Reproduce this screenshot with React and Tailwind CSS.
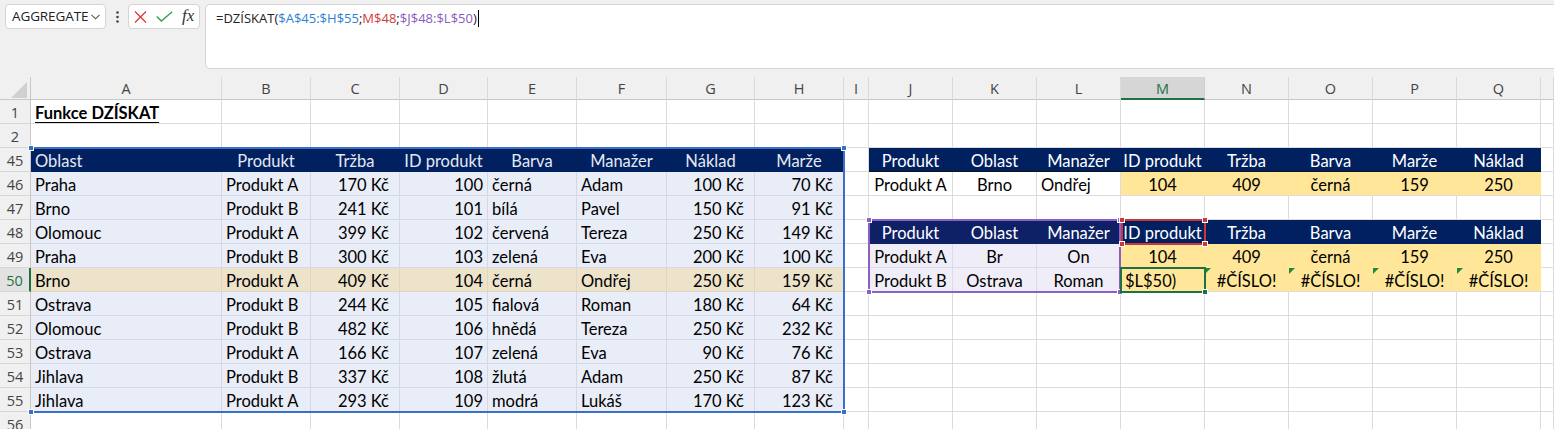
import React from 'react';

const COLS = ['A','B','C','D','E','F','G','H','I','J','K','L','M','N','O','P','Q',''];
const ROWS = [1,2,45,46,47,48,49,50,51,52,53,54,55,56];

const T1 = {
  46: ['Praha','Produkt A','170 Kč','100','černá','Adam','100 Kč','70 Kč'],
  47: ['Brno','Produkt B','241 Kč','101','bílá','Pavel','150 Kč','91 Kč'],
  48: ['Olomouc','Produkt A','399 Kč','102','červená','Tereza','250 Kč','149 Kč'],
  49: ['Praha','Produkt B','300 Kč','103','zelená','Eva','200 Kč','100 Kč'],
  50: ['Brno','Produkt A','409 Kč','104','černá','Ondřej','250 Kč','159 Kč'],
  51: ['Ostrava','Produkt B','244 Kč','105','fialová','Roman','180 Kč','64 Kč'],
  52: ['Olomouc','Produkt B','482 Kč','106','hnědá','Tereza','250 Kč','232 Kč'],
  53: ['Ostrava','Produkt A','166 Kč','107','zelená','Eva','90 Kč','76 Kč'],
  54: ['Jihlava','Produkt B','337 Kč','108','žlutá','Adam','250 Kč','87 Kč'],
  55: ['Jihlava','Produkt A','293 Kč','109','modrá','Lukáš','170 Kč','123 Kč'],
};
const T1H = ['Oblast','Produkt','Tržba','ID produkt','Barva','Manažer','Náklad','Marže'];
const T1ALIGN = ['l','l','r2','r','l','l','r2','r2'];
const T2H = ['Produkt','Oblast','Manažer','ID produkt','Tržba','Barva','Marže','Náklad'];

const KIND = {
  plain: 'bg-white border-[#dcdcdc]',
  t1h: 'bg-[#002060] border-[#002060] text-[#e4e9f3]',
  t1d: 'bg-[#e9edf7] border-[#d3d8e2]',
  t1s: 'bg-[#ece3ca] border-[#dfd7bf]',
  navy: 'bg-[#002060] border-[#002060] text-white',
  navyb: 'bg-[#002060] border-r-[#002060] border-b-[#111111] text-white',
  navyp: 'bg-[#0f2166] border-[#0f2166] text-white',
  yellow: 'bg-[#ffe699] border-[#ffe699]',
  yellowb: 'bg-[#ffe699] border-r-[#ffe699] border-b-[#dcdcdc]',
  lav: 'bg-[#efedf7] border-[#dcd9e8]',
  whiteb: 'bg-white border-r-[#dcdcdc] border-b-[#dcdcdc]',
};

const ALIGN = {
  l: 'justify-start pl-[4px]',
  r: 'justify-end pr-[4px]',
  r2: 'justify-end pr-[10px]',
  c: 'justify-center px-[2px]',
};

function spec(col, row) {
  const ci = COLS.indexOf(col);
  if (row === 1 && col === 'A') return { t: 'Funkce DZÍSKAT', a: 'l', k: 'plain', bold: true };
  if (row === 45 && ci >= 0 && ci <= 7) return { t: T1H[ci], a: ci === 0 ? 'l' : 'c', k: 't1h' };
  if (T1[row] && ci >= 0 && ci <= 7) return { t: T1[row][ci], a: T1ALIGN[ci], k: row === 50 ? 't1s' : 't1d' };
  const ti = ci - 9; // J = 0
  if (ti >= 0 && ti <= 7) {
    if (row === 45) return { t: T2H[ti], a: 'c', k: 'navyb' };
    if (row === 46) {
      const v = ['Produkt A','Brno','Ondřej','104','409','černá','159','250'];
      return { t: v[ti], a: ti === 2 ? 'l' : 'c', k: ti < 3 ? 'whiteb' : 'yellowb' };
    }
    if (row === 48) return { t: T2H[ti], a: 'c', k: ti < 3 ? 'navyp' : 'navy' };
    if (row === 49) {
      const v = ['Produkt A','Br','On','104','409','černá','159','250'];
      return { t: v[ti], a: 'c', k: ti < 3 ? 'lav' : 'yellow' };
    }
    if (row === 50) {
      const v = ['Produkt B','Ostrava','Roman','$L$50)','#ČÍSLO!','#ČÍSLO!','#ČÍSLO!','#ČÍSLO!'];
      return { t: v[ti], a: ti === 3 ? 'l' : 'c', k: ti < 3 ? 'lav' : 'yellowb', err: ti > 3 };
    }
  }
  return { t: '', a: 'l', k: 'plain' };
}

function Handle({ pos, color }) {
  return <div className={`absolute w-[6px] h-[6px] ${pos} ${color} border border-white`} />;
}

function Cell({ col, row }) {
  const s = spec(col, row);
  return (
    <div className={`relative h-[24px] border-r border-b flex items-center overflow-hidden whitespace-nowrap pt-[4px] ${KIND[s.k]} ${ALIGN[s.a]}`}>
      {s.err && (
        <div className="absolute left-0 top-0 w-0 h-0 border-t-[6px] border-t-[#1e8a3e] border-r-[6px] border-r-transparent" />
      )}
      <span className={s.bold ? 'font-bold underline underline-offset-[3px]' : ''}>{s.t}</span>
    </div>
  );
}

function TopBar() {
  return (
    <div className="h-[77px] flex items-start pt-[4px] pl-[5px] bg-[#f0f0f0] font-['Open_Sans',sans-serif] text-[13.5px] text-[#222] overflow-hidden">
      <div className="shrink-0 w-[101px] h-[25px] bg-white border border-[#d5d5d5] rounded-[4px] flex items-center pl-[6px] pr-[5px] justify-between">
        <span className="tracking-[-0.1px]">AGGREGATE</span>
        <svg width="9" height="6" viewBox="0 0 9 6"><path d="M0.5 0.8 L4.5 4.8 L8.5 0.8" fill="none" stroke="#555" strokeWidth="1.1" /></svg>
      </div>
      <div className="shrink-0 w-[22px] h-[25px] flex items-center justify-center">
        <svg width="3" height="12" viewBox="0 0 3 12"><circle cx="1.5" cy="1.5" r="1.3" fill="#444" /><circle cx="1.5" cy="6" r="1.3" fill="#444" /><circle cx="1.5" cy="10.5" r="1.3" fill="#444" /></svg>
      </div>
      <div className="shrink-0 w-[72px] h-[25px] bg-white border border-[#d5d5d5] rounded-[4px] flex items-center pl-[5px] gap-[9px]">
        <svg width="13" height="12" viewBox="0 0 13 12"><path d="M1 0.5 L12 11.5 M12 0.5 L1 11.5" stroke="#e0383e" strokeWidth="1.3" fill="none" /></svg>
        <svg width="17" height="11" viewBox="0 0 17 11"><path d="M0.8 5.5 L5.3 10 L16.2 0.8" stroke="#2f9e4f" strokeWidth="1.3" fill="none" /></svg>
        <span className="font-['Liberation_Serif',serif] italic text-[17px] text-[#333] leading-none -mt-[2px]">fx</span>
      </div>
      <div className="shrink-0 ml-[5px] w-[1400px] h-[65px] bg-white border border-[#d5d5d5] rounded-[5px] pl-[10px] pt-[4px] text-[13px] leading-[18px] whitespace-nowrap">
        <span className="text-[#222]">=DZÍSKAT(</span>
        <span className="text-[#2f7fd2]">$A$45:$H$55</span>
        <span className="text-[#222]">;</span>
        <span className="text-[#cf3c35]">M$48</span>
        <span className="text-[#222]">;</span>
        <span className="text-[#8d5cc2]">$J$48:$L$50</span>
        <span className="text-[#222]">)</span>
        <span className="inline-block w-[1px] h-[17px] bg-black align-[-4px] ml-[1px]" />
      </div>
    </div>
  );
}

function Sheet() {
  return (
    <div className="relative grid grid-cols-[31px_191px_89px_89px_88px_89px_90px_88px_89px_25px_84px_84px_84px_84px_84px_84px_84px_84px_13px] font-['Lato',sans-serif] text-[16.5px] text-black">
      {/* column header row */}
      <div className="relative h-[23px] bg-[#f0f0f0] border-r border-b border-[#c8c8c8]">
        <svg className="absolute left-[11px] top-[5px]" width="16" height="16" viewBox="0 0 16 16"><polygon points="16,0 16,16 0,16" fill="#d0d0d0" /></svg>
      </div>
      {COLS.map((c, i) => (
        <div
          key={'h' + i}
          className={
            c === 'M'
              ? "h-[23px] bg-[#d6d6d6] border-r border-r-[#d0d0d0] border-b-2 border-b-[#1e7145] flex items-center justify-center text-[#1e7145] font-['Open_Sans',sans-serif] text-[14.5px] pt-[2px]"
              : "h-[23px] bg-[#f0f0f0] border-r border-r-[#dadada] border-b border-b-[#c8c8c8] flex items-center justify-center text-[#444] font-['Open_Sans',sans-serif] text-[14.5px] pt-[1px]"
          }
        >
          {c}
        </div>
      ))}
      {ROWS.map((r) => (
        <React.Fragment key={r}>
          <div
            className={
              r === 50
                ? "h-[24px] bg-[#e2e2e2] border-b border-b-[#d6d6d6] border-r-2 border-r-[#1e7145] flex items-center justify-center text-[#1e7145] font-['Open_Sans',sans-serif] text-[14.5px] pt-[2px]"
                : "h-[24px] bg-[#f0f0f0] border-b border-b-[#d6d6d6] border-r border-r-[#c8c8c8] flex items-center justify-center text-[#444] font-['Open_Sans',sans-serif] text-[14.5px] pt-[2px]"
            }
          >
            {r}
          </div>
          {COLS.map((c, i) => (
            <Cell key={c + i} col={c} row={r} />
          ))}
        </React.Fragment>
      ))}

      {/* range highlight: A45:H55 */}
      <div className="absolute left-[31px] top-[70px] w-[814px] h-[266px] border-2 border-l-0 border-[#3b6fc6] pointer-events-none">
        <Handle pos="-left-[3px] -top-[4px]" color="bg-[#3b6fc6]" />
        <Handle pos="-right-[4px] -top-[4px]" color="bg-[#3b6fc6]" />
        <Handle pos="-left-[3px] -bottom-[4px]" color="bg-[#3b6fc6]" />
        <Handle pos="-right-[4px] -bottom-[4px]" color="bg-[#3b6fc6]" />
      </div>
      {/* range highlight: J48:L50 */}
      <div className="absolute left-[868px] top-[142px] w-[253px] h-[74px] border-2 border-[#8c5fc4] pointer-events-none">
        <Handle pos="-left-[4px] -top-[4px]" color="bg-[#8c5fc4]" />
        <Handle pos="-right-[4px] -top-[4px]" color="bg-[#8c5fc4]" />
        <Handle pos="-left-[4px] -bottom-[4px]" color="bg-[#8c5fc4]" />
        <Handle pos="-right-[4px] -bottom-[4px]" color="bg-[#8c5fc4]" />
      </div>
      {/* range highlight: M48 */}
      <div className="absolute left-[1121px] top-[142px] w-[85px] h-[26px] border-2 border-[#c9393b] pointer-events-none">
        <Handle pos="-left-[4px] -top-[4px]" color="bg-[#c9393b]" />
        <Handle pos="-right-[4px] -top-[4px]" color="bg-[#c9393b]" />
        <Handle pos="-left-[4px] -bottom-[4px]" color="bg-[#c9393b]" />
        <Handle pos="-right-[4px] -bottom-[4px]" color="bg-[#c9393b]" />
      </div>
      {/* active cell M50 */}
      <div className="absolute left-[1120px] top-[190px] w-[86px] h-[26px] border-2 border-[#1e7145] pointer-events-none">
        <Handle pos="-right-[4px] -bottom-[4px]" color="bg-[#1e7145]" />
      </div>
    </div>
  );
}

export default function App() {
  return (
    <div className="w-[1554px] h-[429px] overflow-hidden bg-white">
      <TopBar />
      <Sheet />
    </div>
  );
}
